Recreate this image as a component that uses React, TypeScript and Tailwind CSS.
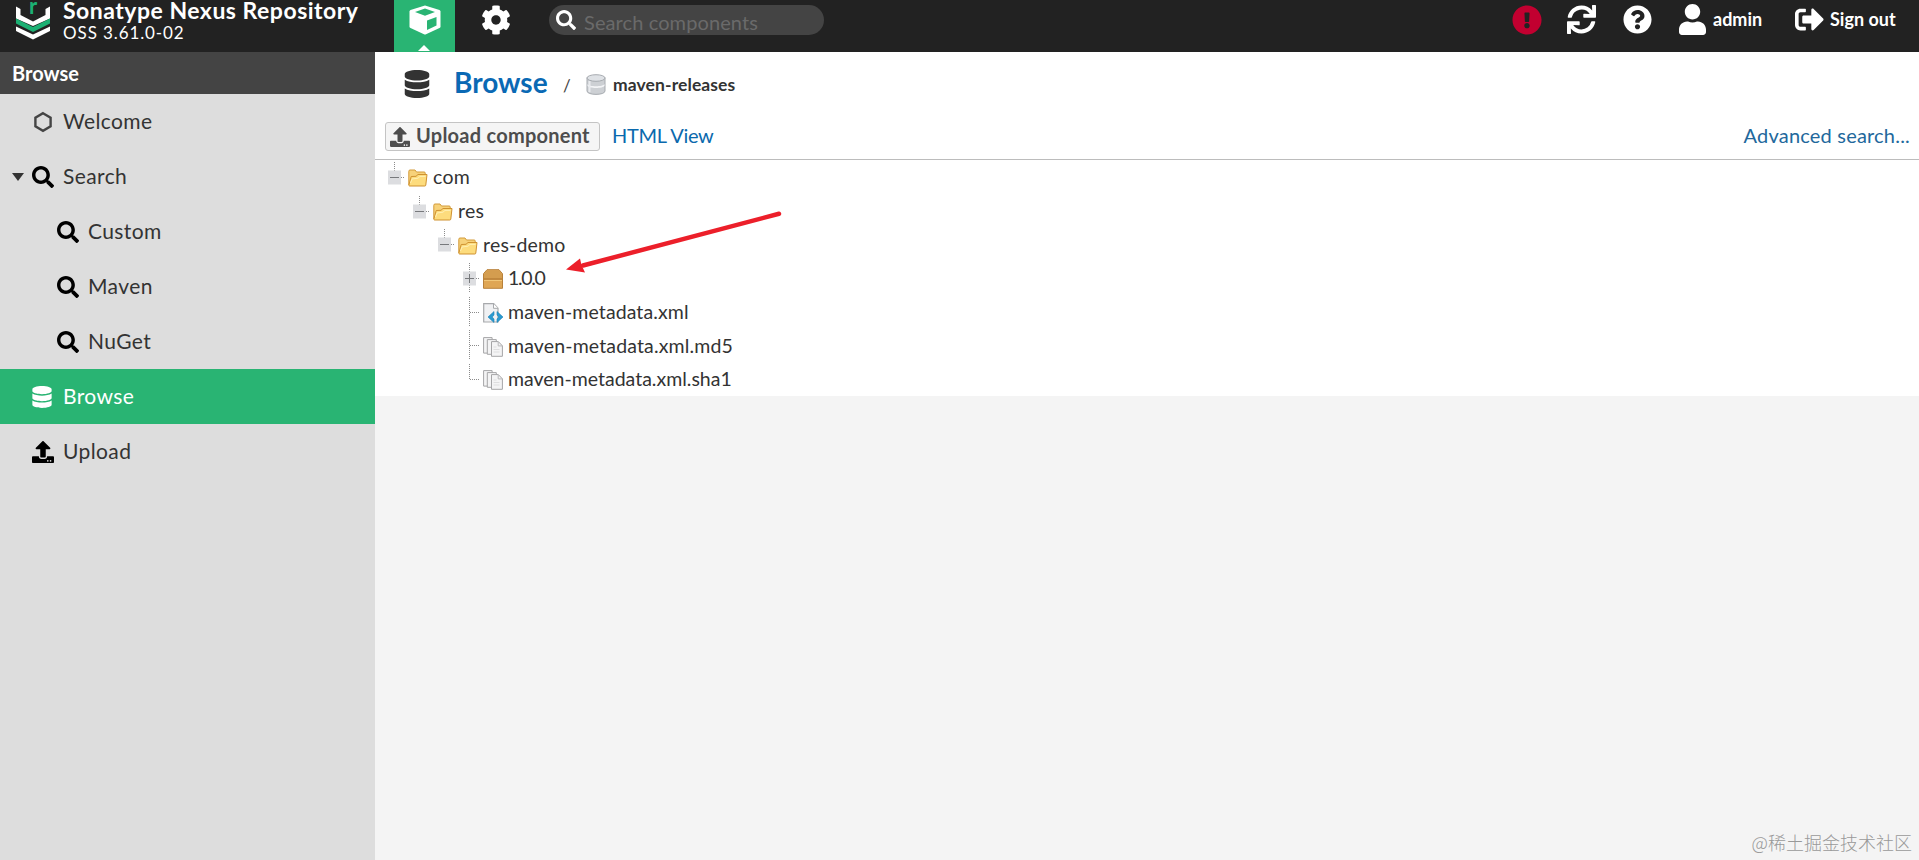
import type { ReactNode } from 'react';
import {
  FaCog,
  FaDatabase,
  FaExclamationCircle,
  FaQuestionCircle,
  FaSearch,
  FaSignOutAlt,
  FaSync,
  FaUpload,
  FaUser
} from 'react-icons/fa';

interface NavItem {
  label: string;
  icon: ReactNode;
  nested?: boolean;
  active?: boolean;
  expanded?: boolean;
}

const navItems: NavItem[] = [
  { label: 'Welcome', icon: <HexIcon /> },
  { label: 'Search', icon: <FaSearch className="size-[22px] text-black" />, expanded: true },
  { label: 'Custom', icon: <FaSearch className="size-[22px] text-black" />, nested: true },
  { label: 'Maven', icon: <FaSearch className="size-[22px] text-black" />, nested: true },
  { label: 'NuGet', icon: <FaSearch className="size-[22px] text-black" />, nested: true },
  { label: 'Browse', icon: <FaDatabase className="h-[22px] w-5" />, active: true },
  { label: 'Upload', icon: <FaUpload className="size-[22px] text-black" /> }
];

type Toggle = 'minus' | 'plus' | 'tee' | 'elbow';

interface TreeNode {
  label: string;
  indent: string;
  toggle: Toggle;
  icon: ReactNode;
  tracking: string;
}

const treeNodes: TreeNode[] = [
  { label: 'com', indent: 'pl-3', toggle: 'minus', icon: <FolderIcon />, tracking: 'tracking-[0.3px]' },
  { label: 'res', indent: 'pl-[37px]', toggle: 'minus', icon: <FolderIcon />, tracking: 'tracking-[0.3px]' },
  { label: 'res-demo', indent: 'pl-[62px]', toggle: 'minus', icon: <FolderIcon />, tracking: 'tracking-[0.2px]' },
  { label: '1.0.0', indent: 'pl-[87px]', toggle: 'plus', icon: <BoxIcon />, tracking: 'tracking-[-1.3px]' },
  { label: 'maven-metadata.xml', indent: 'pl-[87px]', toggle: 'tee', icon: <XmlIcon />, tracking: 'tracking-[0.1px]' },
  { label: 'maven-metadata.xml.md5', indent: 'pl-[87px]', toggle: 'tee', icon: <FilesIcon />, tracking: 'tracking-[0.15px]' },
  { label: 'maven-metadata.xml.sha1', indent: 'pl-[87px]', toggle: 'elbow', icon: <FilesIcon />, tracking: 'tracking-[0px]' }
];

function HexIcon() {
  return (
    <svg width="22" height="22" viewBox="0 0 22 22" fill="none" stroke="#444" strokeWidth="2.4">
      <path d="M11 2.2 18.600 6.600v8.800L11 19.800l-7.600-4.400V6.600z" />
    </svg>
  );
}

function NexusLogo() {
  return (
    <svg width="34" height="40" viewBox="0 0 34 40">
      <path d="M0 6.5 4.5 9v6L17 21.5 29.500 15V9L34 6.500v12L17 26 0 18.500z" fill="#fff" />
      <path d="M0 18.500 17 27l17-8.500v5L17 32 0 23.500z" fill="#1bb073" />
      <path d="M0 26.500 17 34.500l17-8v4.500L17 39.500 0 31z" fill="#fff" />
    </svg>
  );
}

function CubeIcon() {
  return (
    <svg width="32" height="30" viewBox="0 0 32 30">
      <path d="M16 .5 30.500 5q1 .5 1 1.500v15q0 1-1 1.500L17 29.200q-1 .4-2 0L1.500 23q-1-.5-1-1.500v-15Q.5 5.500 1.500 5z" fill="#fff" />
      <path d="M16 3.500 26 7l-10 3.800L6 7z" fill="#29b473" />
      <path d="M18 15.500 27.500 12v8.500L18 25z" fill="#29b473" />
    </svg>
  );
}

function FolderIcon() {
  return (
    <svg width="20" height="18" viewBox="0 0 20 18" strokeLinejoin="round">
      <path d="M.8 16V2.300Q.8 1 2 1h5l1.500 2h7.700q1 0 1 1v3" fill="#f7d27a" stroke="#d39b3a" />
      <path d="M3.200 7.500 8 7.300l2-1.800h9L17.800 16q-.1 1-1 1H1.500Q.8 17 .9 16z" fill="#fddc7d" stroke="#cf9231" />
      <path d="M2.500 14 4 10l6-.8 2-1.800h5.500" fill="none" stroke="#fff0b5" />
    </svg>
  );
}

function BoxIcon() {
  return (
    <svg width="20" height="20" viewBox="0 0 20 20">
      <path d="M4 .7h12l3.500 4v14.600H.5V4.700z" fill="#dfa654" stroke="#b8813a" />
      <path d="M4 1.200h12L19 5v4.500H1V5z" fill="#d49d4f" />
      <path d="M1 10h18" stroke="#a66d2b" />
      <path d="M1 11.500h18" stroke="#f1c779" />
    </svg>
  );
}

function XmlIcon() {
  return (
    <svg width="20" height="20" viewBox="0 0 20 20" fill="none">
      <path d="M.7.7h10l4.300 4.500v13.800H.7z" fill="#f0f1f3" stroke="#a7a9ac" strokeWidth="1.200" />
      <path d="M10.500.8v4.500H15" fill="#fff" stroke="#a7a9ac" />
      <path d="M11 8.500 5 14l6 5.500V16l-1.800-2 1.800-2zM14 8.500l6 5.500-6 5.500V16l1.800-2-1.800-2z" fill="#2a9ad0" stroke="#1a7fb5" strokeWidth=".6" />
    </svg>
  );
}

function FilesIcon() {
  return (
    <svg width="20" height="20" viewBox="0 0 20 20" fill="#f4f4f5" stroke="#a5a5a7">
      <path d="M.6.600h8.500v15.500H.6z" />
      <path d="M4.300 2.600h9v14.700h-9z" />
      <path d="M8.500 4.600h6.800l4.100 4.200v10.500H8.500z" />
      <path d="M15.200 4.700v4.200h4.200" fill="none" stroke="#b9b9bb" />
      <path d="M10.500 10h3M10.500 12.500h6M10.500 15h6" fill="none" stroke="#dededf" />
    </svg>
  );
}

function DatabaseBadge() {
  return (
    <svg className="mt-0.5" width="20" height="21" viewBox="0 0 20 21" stroke="#a7abb0">
      <path d="M1 3.500v13.500c0 4.500 18 4.500 18 0V3.500" fill="#cdd0d4" />
      <ellipse cx="10" cy="4" rx="9" ry="3.300" fill="#dfe2e6" />
      <path d="M1.500 10c1 3 16 3 17 0v1.800c-1 3-16 3-17 0z" fill="#f3f4f6" stroke="none" />
      <path d="M3.500 7v11" stroke="#e9ebee" strokeWidth="2" />
    </svg>
  );
}

// Dotted connector lines plus the expand / collapse square
function TreeToggle({ kind }: { kind: Toggle }) {
  const hasBox = kind === 'minus' || kind === 'plus';
  return (
    <svg className="shrink-0" width="21" height="34" viewBox="0 0 21 34" stroke="#8b8b8b" fill="none">
      {kind === 'minus' && <path d="M7.500 2v9" strokeDasharray="1 1" />}
      {(kind === 'plus' || kind === 'tee') && <path d="M7.500 2v29" strokeDasharray="1 1" />}
      {kind === 'elbow' && <path d="M7.500 2v15" strokeDasharray="1 1" />}
      <path d={hasBox ? 'M14 17.500h4' : 'M8 17.500h10'} strokeDasharray="1 1" />
      {hasBox && <rect x="1" y="10.500" width="13" height="14" fill="#dcdde0" stroke="none" />}
      {hasBox && <path d="M3 17.500h9" stroke="#77797c" />}
      {kind === 'plus' && <path d="M7.500 13v9" stroke="#77797c" />}
    </svg>
  );
}

function Header() {
  return (
    <header className="flex h-[52px] shrink-0 items-start overflow-hidden bg-[#222] text-white">
      <div className="flex w-[394px] shrink-0 pl-4">
        <div className="relative">
          <NexusLogo />
          <span className="absolute -top-[3px] left-[13px] text-[22px] leading-[18px] font-bold text-[#1bb073]">r</span>
        </div>
        <div className="ml-[13px] whitespace-nowrap">
          <div className="text-[23px] leading-5 font-bold tracking-[0.5px]">Sonatype Nexus Repository</div>
          <div className="mt-[3px] text-[17px] leading-5 tracking-[0.9px]">OSS 3.61.0-02</div>
        </div>
      </div>
      <div className="relative flex h-full w-[61px] shrink-0 justify-center bg-[#29b473] pt-[5px]">
        <CubeIcon />
        <svg className="absolute bottom-px left-6" width="12" height="6" viewBox="0 0 12 6">
          <path d="M6 0l6 6H0z" fill="#fff" />
        </svg>
      </div>
      <FaCog className="mt-[5px] ml-[26px] size-[30px] shrink-0" />
      <div className="mt-[5px] ml-[38px] flex h-[30px] w-[275px] shrink-0 items-center rounded-full bg-[#444] pl-[7px]">
        <FaSearch className="size-5" />
        <span className="mt-1 ml-2 text-[20px] leading-6 tracking-[0.1px] text-[#6a6a6a]">Search components</span>
      </div>
      <div className="ml-auto flex h-[39px] items-center pr-[22px] font-bold">
        <FaExclamationCircle className="size-[30px] text-[#c20030]" />
        <FaSync className="ml-[25px] size-[29px]" />
        <FaQuestionCircle className="ml-[27px] size-[29px]" />
        <FaUser className="ml-[27px] h-[31px] w-[27px]" />
        <span className="ml-[7px] w-[51px] text-[18px] whitespace-nowrap">admin</span>
        <FaSignOutAlt className="ml-[31px] size-[29px]" />
        <span className="ml-[6px] w-[67px] text-[18px] whitespace-nowrap">Sign out</span>
      </div>
    </header>
  );
}

function Sidebar() {
  return (
    <aside className="w-[375px] shrink-0 bg-[#ddd]">
      <h2 className="flex h-[42px] items-center bg-[#444] pl-3 text-[20px] font-bold text-white">
        <span>Browse</span>
      </h2>
      <nav>
        {navItems.map((item) => (
          <div
            key={item.label}
            className={`flex h-[55px] items-center pr-4 ${item.nested ? 'pl-[57px]' : item.expanded ? 'pl-3' : 'pl-8'} ${
              item.active ? 'bg-[#29b473] text-white' : 'text-[#333]'
            }`}
          >
            {item.expanded && (
              <svg className="mr-2" width="12" height="8" viewBox="0 0 12 8">
                <path d="M0 0h12L6 8z" fill="#333" />
              </svg>
            )}
            <span className="flex w-[31px] shrink-0">{item.icon}</span>
            <span className="-mt-0.5 text-[21px] leading-6 tracking-[0.4px]">{item.label}</span>
          </div>
        ))}
      </nav>
    </aside>
  );
}

function Toolbar() {
  return (
    <div className="flex h-[45px] items-start border-b border-[#bcbcbc] pt-[7px] pr-[9px] pl-[10px]">
      <button className="flex h-[29px] w-[215px] items-center rounded-[3px] border border-[#c4c4c4] bg-[#f5f5f5] pl-1 text-[#4d4d4d]">
        <FaUpload className="size-5 shrink-0" />
        <span className="-mt-[3px] ml-[6px] text-[20px] leading-6 font-bold tracking-[0.25px] whitespace-nowrap">
          Upload component
        </span>
      </button>
      <a className="mt-px ml-3 text-[20px] leading-6 tracking-[-0.3px] text-[#0a69ad]">HTML View</a>
      <a className="mt-px ml-auto text-[20px] leading-6 tracking-[0.2px] text-[#22689c]">Advanced search...</a>
    </div>
  );
}

function TreePanel() {
  return (
    <ul className="relative h-[236px] text-[19.500px] text-[#333]">
      {treeNodes.map((node) => (
        <li key={node.label} className={`flex h-[33.700px] items-center ${node.indent}`}>
          <TreeToggle kind={node.toggle} />
          <span className="mt-[3px] w-[25px] shrink-0">{node.icon}</span>
          <span className={`whitespace-nowrap ${node.tracking}`}>{node.label}</span>
        </li>
      ))}
      {/* Arrow pointing at the released version */}
      <svg className="absolute top-[50px] left-[190px]" width="220" height="65" viewBox="0 0 220 65">
        <path d="M214 3.800 18 55.500" stroke="#ec1f2a" strokeWidth="4.500" strokeLinecap="round" />
        <path d="M1 59.500 15 48.500l1.500 6.500 3.500 7.500z" fill="#ec1f2a" />
      </svg>
    </ul>
  );
}

export default function App() {
  return (
    <div className="flex h-[860px] w-[1919px] flex-col overflow-hidden bg-[#f4f4f4] font-['Lato','Noto_Sans_CJK_SC',sans-serif]">
      <Header />
      <div className="flex min-h-0 flex-1">
        <Sidebar />
        <main className="relative min-w-0 flex-1">
          <div className="bg-white">
            <div className="flex h-[63px] items-center pl-[29px]">
              <FaDatabase className="h-7 w-[26px] text-[#333]" />
              <h1 className="-mt-[3px] ml-[24px] w-[109px] text-[28px] leading-8 font-bold text-[#0a69b4]">Browse</h1>
              <span className="mt-1 w-[23px] text-[17px] text-[#444]">/</span>
              <DatabaseBadge />
              <span className="mt-1 ml-[7px] text-[17.500px] font-bold tracking-[0.1px] text-[#333]">maven-releases</span>
            </div>
            <Toolbar />
            <TreePanel />
          </div>
          <div className="absolute right-[7px] bottom-[6px] font-['Noto_Sans_CJK_SC',sans-serif] text-[18px] leading-6 font-light text-[#999]">
            @稀土掘金技术社区
          </div>
        </main>
      </div>
    </div>
  );
}
